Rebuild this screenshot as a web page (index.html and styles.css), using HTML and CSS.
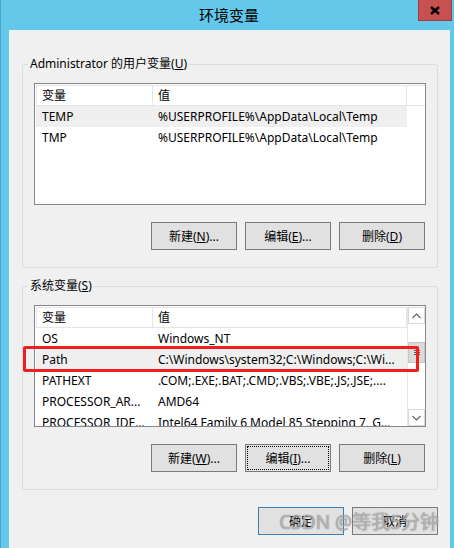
FILE: index.html
```html
<!DOCTYPE html>
<html lang="zh-CN">
<head>
<meta charset="utf-8">
<title>环境变量</title>
<link rel="stylesheet" href="styles.css">
</head>
<body>
<div class="window">
  <div class="titlebar">
    <span class="title">环境变量</span>
    <div class="close"><svg width="10" height="9" viewBox="0 0 10 9"><path d="M1 1 L9 8 M9 1 L1 8" stroke="#000" stroke-width="2.4" fill="none"/></svg></div>
  </div>
  <div class="client">
    <fieldset class="group">
      <legend>Administrator 的用户变量(<u>U</u>)</legend>
      <div class="listview">
        <div class="lv-main">
          <div class="lv-header">
            <div class="hc c1">变量</div>
            <div class="hc c2">值</div>
            <div class="hc filler"></div>
          </div>
          <div class="row sel"><span class="c1">TEMP</span><span class="c2">%USERPROFILE%\AppData\Local\Temp</span></div>
          <div class="row"><span class="c1">TMP</span><span class="c2">%USERPROFILE%\AppData\Local\Temp</span></div>
        </div>
      </div>
      <div class="btnrow">
        <button class="btn">新建(<u>N</u>)...</button>
        <button class="btn">编辑(<u>E</u>)...</button>
        <button class="btn">删除(<u>D</u>)</button>
      </div>
    </fieldset>

    <fieldset class="group second">
      <legend>系统变量(<u>S</u>)</legend>
      <div class="lv-wrap">
        <div class="listview">
          <div class="lv-main">
            <div class="lv-header">
              <div class="hc c1">变量</div>
              <div class="hc c2">值</div>
            </div>
            <div class="row"><span class="c1">OS</span><span class="c2">Windows_NT</span></div>
            <div class="row sel"><span class="c1">Path</span><span class="c2">C:\Windows\system32;C:\Windows;C:\Wi...</span></div>
            <div class="row"><span class="c1">PATHEXT</span><span class="c2">.COM;.EXE;.BAT;.CMD;.VBS;.VBE;.JS;.JSE;....</span></div>
            <div class="row"><span class="c1">PROCESSOR_AR...</span><span class="c2">AMD64</span></div>
            <div class="row"><span class="c1">PROCESSOR_IDE...</span><span class="c2">Intel64 Family 6 Model 85 Stepping 7, G...</span></div>
          </div>
          <div class="scrollbar">
            <div class="sb-btn"><svg width="9" height="6" viewBox="0 0 9 6"><path d="M0.5 5 L4.5 1 L8.5 5" stroke="#606060" stroke-width="1.1" fill="none"/></svg></div>
            <div class="sb-track">
              <div class="sb-gap1"></div>
              <div class="sb-thumb"><span class="grip"></span><span class="grip"></span><span class="grip"></span></div>
            </div>
            <div class="sb-btn"><svg width="9" height="6" viewBox="0 0 9 6"><path d="M0.5 1 L4.5 5 L8.5 1" stroke="#606060" stroke-width="1.1" fill="none"/></svg></div>
          </div>
        </div>
        <div class="highlight"></div>
      </div>
      <div class="btnrow">
        <button class="btn">新建(<u>W</u>)...</button>
        <button class="btn focus">编辑(<u>I</u>)...</button>
        <button class="btn">删除(<u>L</u>)</button>
      </div>
    </fieldset>

    <div class="dlg-buttons">
      <button class="btn default">确定</button>
      <button class="btn">取消</button>
      <span class="watermark">CSDN @等我5分钟</span>
    </div>
  </div>
</div>
</body>
</html>
```

FILE: styles.css
```css
html, body {
  margin: 0;
  padding: 0;
}
body {
  width: 454px;
  height: 548px;
  overflow: hidden;
  font-family: "Noto Sans", "Noto Sans CJK SC", sans-serif;
  font-size: 12px;
  color: #000;
}
.window {
  background: #63c8e9;
  height: 548px;
  display: flex;
  flex-direction: column;
  border-left: 1px solid #4aa9c9;
  box-sizing: border-box;
}
.titlebar {
  height: 30px;
  flex: none;
  display: grid;
  grid-template-columns: 1fr auto 1fr;
  align-items: start;
}
.title {
  grid-column: 2;
  font-family: "Noto Sans CJK SC", sans-serif;
  font-size: 15px;
  line-height: 30px;
  padding-left: 3px;
}
.close {
  grid-column: 3;
  justify-self: end;
  margin-right: 2px;
  width: 34px;
  height: 21px;
  box-sizing: border-box;
  background: #c75050;
  border: 1px solid #a03c3c;
  border-top: none;
  display: flex;
  align-items: center;
  justify-content: center;
}
.client {
  flex: 1;
  margin: 0 4px 0 8px;
  background: #f0f0f0;
  padding: 26px 12px 0 13px;
  display: flex;
  flex-direction: column;
}
.group {
  margin: 0;
  border: 1px solid #d5dfe5;
  border-radius: 3px;
  padding: 11px 11px 17px 11px;
  min-width: 0;
}
.group.second {
  margin-top: 10px;
}
.group legend {
  margin-left: -6px;
  padding: 0 2px;
  line-height: 16px;
  font-size: 12px;
}
.lv-wrap {
  position: relative;
}
.listview {
  height: 122px;
  box-sizing: border-box;
  border: 1px solid #828790;
  background: #fff;
  padding: 1px 0 0 1px;
  display: flex;
  overflow: hidden;
}
.lv-main {
  flex: 1;
  min-width: 0;
}
.lv-header {
  display: flex;
  height: 21px;
}
.hc {
  box-sizing: border-box;
  border: 1px solid #e5e5e5;
  border-left-width: 0;
  height: 21px;
  line-height: 19px;
  padding-left: 5px;
}
.hc.c1 {
  width: 117px;
  border-left-width: 1px;
}
.hc.c2 {
  width: 254px;
}
.hc.filler {
  flex: 1;
  border-right: none;
}
.row {
  display: flex;
  height: 21px;
  line-height: 21px;
  width: 371px;
  white-space: nowrap;
}
.row.sel {
  background: #efefef;
}
.row .c1 {
  width: 117px;
  padding-left: 6px;
  box-sizing: border-box;
  overflow: hidden;
}
.row .c2 {
  flex: 1;
  padding-left: 5px;
  overflow: hidden;
}
.scrollbar {
  width: 17px;
  flex: none;
  display: flex;
  flex-direction: column;
  background: #fff;
  border-left: 1px solid #e8e8e8;
}
.sb-btn {
  height: 17px;
  box-sizing: border-box;
  border: 1px solid #dadada;
  background: #fff;
  display: flex;
  align-items: center;
  justify-content: center;
}
.sb-track {
  flex: 1;
  display: flex;
  flex-direction: column;
}
.sb-gap1 {
  height: 18px;
}
.sb-thumb {
  height: 21px;
  box-sizing: border-box;
  background: #dadada;
  border: 1px solid #c6c6c6;
  display: flex;
  flex-direction: column;
  align-items: center;
  justify-content: center;
  gap: 1px;
}
.grip {
  width: 6px;
  height: 1px;
  background: #555;
}
.highlight {
  position: absolute;
  left: -11px;
  top: 41px;
  width: 396px;
  height: 26px;
  box-sizing: border-box;
  border: 3px solid #f01e1e;
  border-radius: 2px;
}
.btnrow {
  display: flex;
  justify-content: flex-end;
  gap: 8px;
  margin-top: 17px;
  padding-right: 1px;
}
.btn {
  width: 86px;
  height: 28px;
  box-sizing: border-box;
  background: #e1e1e1;
  border: 1px solid #7a7a7a;
  border-radius: 0;
  font-family: "Noto Sans", "Noto Sans CJK SC", sans-serif;
  font-size: 12px;
  color: #000;
  padding: 0;
}
.btn.focus {
  outline: 1px dotted #000;
  outline-offset: -3px;
}
.btn.default {
  border-color: #3c7fb1;
}
.dlg-buttons {
  position: relative;
  display: flex;
  justify-content: flex-end;
  gap: 8px;
  margin-top: 17px;
}
.watermark {
  position: absolute;
  right: -1px;
  top: 0;
  font-family: "Noto Sans", "Noto Sans CJK SC", sans-serif;
  font-size: 19px;
  color: rgba(240, 240, 240, 0.55);
  text-shadow: 0 0 1px rgba(60, 60, 60, 0.6), 0 0 1px rgba(60, 60, 60, 0.4);
  white-space: nowrap;
}
```
